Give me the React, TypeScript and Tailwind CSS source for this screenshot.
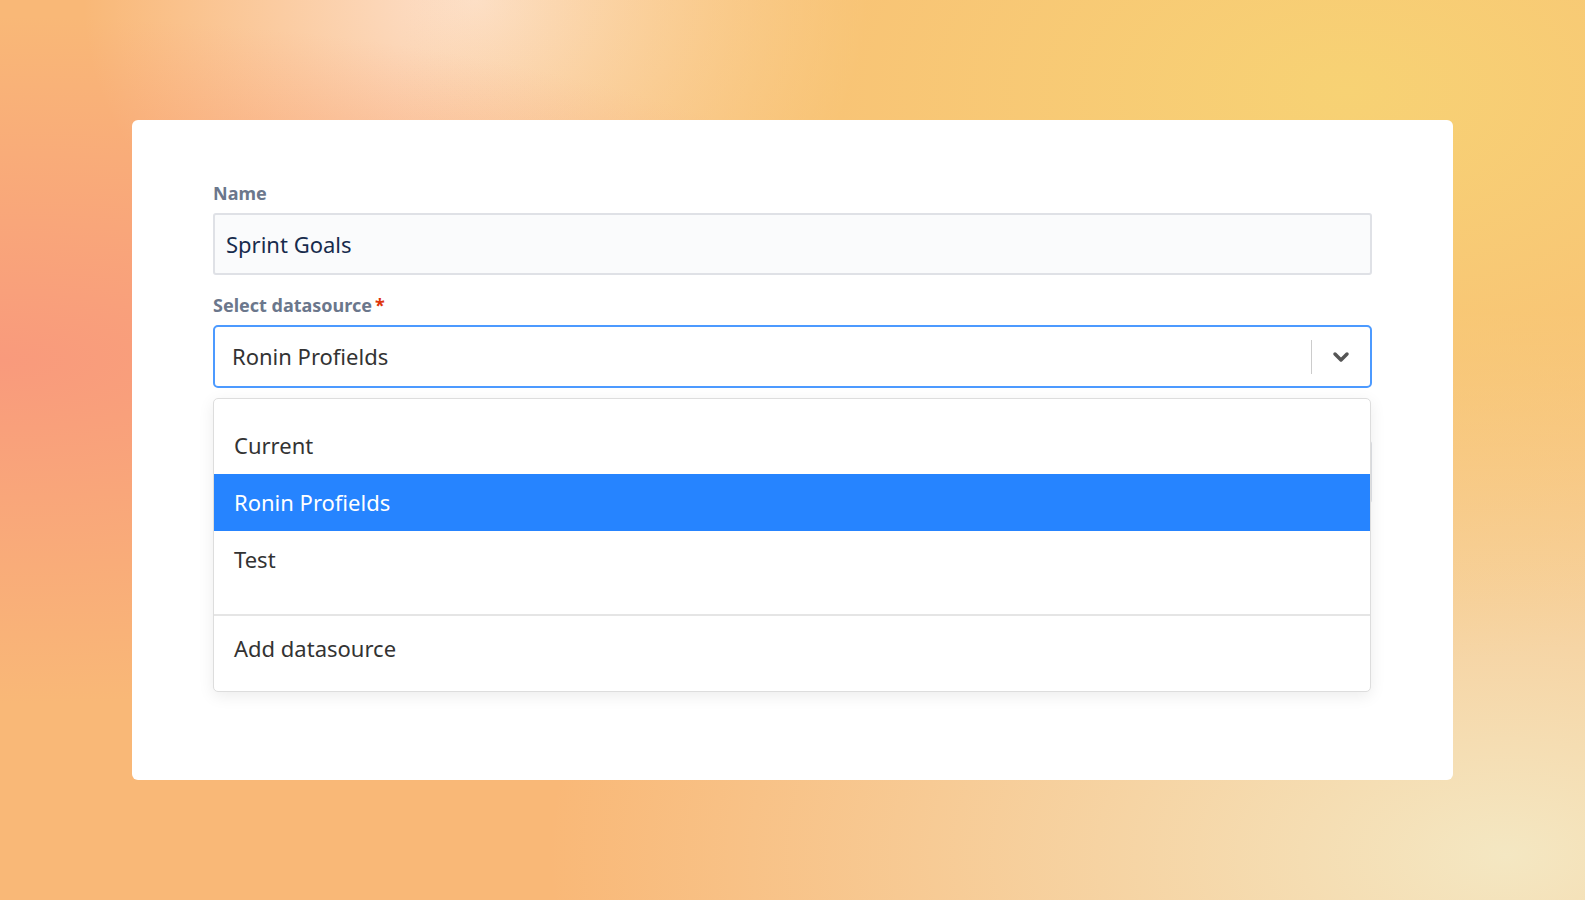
import { ChevronDown } from "lucide-react";

const options = ["Current", "Ronin Profields", "Test"];

const App = () => {
  return (
    <div className="relative h-[900px] w-full overflow-hidden bg-[#f9b877] pt-[120px] font-['Liberation_Sans',Arial,sans-serif]">
      <div className="pointer-events-none absolute inset-0 bg-[radial-gradient(ellipse_at_0%_40%,#f99a7c_0%,rgba(249,154,124,0)_45%),radial-gradient(ellipse_at_85%_10%,#f7d274_0%,rgba(247,210,116,0)_50%),radial-gradient(ellipse_at_95%_95%,#f4e7c2_0%,rgba(244,231,194,0)_45%),radial-gradient(ellipse_at_30%_0%,#fde0cc_0%,rgba(253,224,204,0)_25%)]" />
      <div className="relative mx-[132px] h-[660px] rounded-md bg-white px-[81px] pt-[60px]">
        <label className="block text-[18px] font-bold text-[#6b778c]">Name</label>
        <div className="mt-[6px] flex h-[62px] items-center rounded-[3px] border-2 border-[#dfe1e6] bg-[#fafbfc] px-[11px] text-[22px] text-[#172b4d]">
          Sprint Goals
        </div>
        <label className="mt-[17px] block text-[18px] font-bold text-[#6b778c]">
          Select datasource<span className="ml-[3px] text-[#de350b]">*</span>
        </label>
        <div className="mt-[6px] flex h-[63px] items-center rounded-[5px] border-2 border-[#4c9aff] bg-white pl-[17px] text-[22px] text-[#333]">
          <span className="flex-1">Ronin Profields</span>
          <div className="h-[34px] w-px bg-[#ccc]" />
          <ChevronDown className="mx-[17px] h-6 w-6 text-[#555]" strokeWidth={3.5} />
        </div>
        <div className="mt-[20px] text-[18px] font-bold text-[#6b778c]">Details</div>
        <div className="mt-[6px] h-[62px] rounded-[3px] border-2 border-[#dfe1e6] bg-[#fafbfc]" />

        <div className="absolute left-[81px] right-[82px] top-[278px] overflow-hidden rounded-[5px] border border-[#ddd] bg-white shadow-[0_4px_16px_rgba(0,0,0,0.08)]">
          <div className="pb-[26px] pt-[18px]">
            {options.map((o) => (
              <div
                key={o}
                className={`flex h-[57px] items-center px-[20px] text-[22px] ${
                  o === "Ronin Profields" ? "bg-[#2684ff] text-white" : "text-[#333]"
                }`}
              >
                {o}
              </div>
            ))}
          </div>
          <div className="flex h-[77px] items-start border-t-2 border-[#e5e5e5] px-[20px] pt-[16px] text-[22px] text-[#333]">
            Add datasource
          </div>
        </div>
      </div>
    </div>
  );
};

export default App;
